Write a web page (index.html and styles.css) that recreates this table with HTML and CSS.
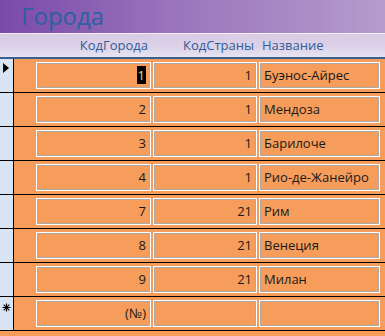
FILE: index.html
```html
<!DOCTYPE html>
<html lang="ru">
<head>
<meta charset="utf-8">
<title>Города</title>
<link rel="stylesheet" href="styles.css">
</head>
<body>
<div class="form">
  <header class="form-header">
    <h1 class="form-title">Города</h1>
  </header>
  <div class="page-header">
    <div class="gutter"></div>
    <div class="fields">
      <span class="label num">КодГорода</span>
      <span class="label num">КодСтраны</span>
      <span class="label">Название</span>
    </div>
  </div>
  <div class="records">
    <div class="record">
      <div class="selector"><span class="current"></span></div>
      <div class="fields">
        <span class="field num"><span class="sel">1</span></span>
        <span class="field num">1</span>
        <span class="field">Буэнос-Айрес</span>
      </div>
    </div>
    <div class="record">
      <div class="selector"></div>
      <div class="fields">
        <span class="field num">2</span>
        <span class="field num">1</span>
        <span class="field">Мендоза</span>
      </div>
    </div>
    <div class="record">
      <div class="selector"></div>
      <div class="fields">
        <span class="field num">3</span>
        <span class="field num">1</span>
        <span class="field">Барилоче</span>
      </div>
    </div>
    <div class="record">
      <div class="selector"></div>
      <div class="fields">
        <span class="field num">4</span>
        <span class="field num">1</span>
        <span class="field">Рио-де-Жанейро</span>
      </div>
    </div>
    <div class="record">
      <div class="selector"></div>
      <div class="fields">
        <span class="field num">7</span>
        <span class="field num">21</span>
        <span class="field">Рим</span>
      </div>
    </div>
    <div class="record">
      <div class="selector"></div>
      <div class="fields">
        <span class="field num">8</span>
        <span class="field num">21</span>
        <span class="field">Венеция</span>
      </div>
    </div>
    <div class="record">
      <div class="selector"></div>
      <div class="fields">
        <span class="field num">9</span>
        <span class="field num">21</span>
        <span class="field">Милан</span>
      </div>
    </div>
    <div class="record">
      <div class="selector">
        <svg class="new" width="9" height="9" viewBox="0 0 9 9" aria-hidden="true">
          <path d="M4.5 0.5V8.5M0.5 4.5H8.5M1.7 1.7L7.3 7.3M7.3 1.7L1.7 7.3" stroke="#000" stroke-width="1.1" fill="none"/>
        </svg>
      </div>
      <div class="fields">
        <span class="field num">(№)</span>
        <span class="field num"></span>
        <span class="field"></span>
      </div>
    </div>
  </div>
</div>
</body>
</html>
```
FILE: styles.css
```css
html, body {
  margin: 0;
  padding: 0;
}

body {
  width: 385px;
  height: 336px;
  overflow: hidden;
  background: #f69d5b;
  font-family: "Open Sans", "Noto Sans", sans-serif;
}

.form {
  display: flex;
  flex-direction: column;
}

/* Form header band */
.form-header {
  height: 34px;
  box-sizing: border-box;
  background: linear-gradient(90deg, #7a4aa8 0%, #9a74bc 45%, #b59ccd 100%);
  border-bottom: 1px solid #f4f0f8;
}

.form-title {
  margin: 0;
  padding-left: 21px;
  font-weight: normal;
  font-size: 24px;
  line-height: 31px;
  color: #2e5fa0;
}

/* Column labels band */
.page-header {
  height: 23px;
  display: flex;
  background: linear-gradient(180deg, #d9cbe5 0%, #dcd2e8 55%, #e6e3f2 100%);
  border-bottom: 2px solid #3b5f8e;
}

.page-header .gutter {
  width: 36px;
  flex: none;
}

.label {
  font-size: 13px;
  line-height: 22px;
  color: #2f5c9a;
  padding: 0 3px;
}

/* Shared column grid for labels and fields */
.fields {
  display: grid;
  grid-template-columns: 115px 104px 121px;
  column-gap: 2px;
}

.num {
  text-align: right;
}

.records {
  display: flex;
  flex-direction: column;
}

.record {
  display: flex;
  height: 33px;
  border-bottom: 1px solid #000;
}

.selector {
  width: 13px;
  flex: none;
  background: #d6e4f3;
  border-right: 1px solid #000;
  margin-right: 22px;
  position: relative;
}

.record .fields {
  padding-top: 3px;
}

.current {
  position: absolute;
  left: 3px;
  top: 4px;
  width: 0;
  height: 0;
  border-top: 5px solid transparent;
  border-bottom: 5px solid transparent;
  border-left: 6px solid #000;
}

.new {
  position: absolute;
  left: 2px;
  top: 6px;
  display: block;
}

.field {
  box-sizing: border-box;
  height: 27px;
  border: 1px solid #fff;
  box-shadow: inset 0 0 0 1px #a9a9a9;
  padding: 0 4px;
  font-size: 13px;
  line-height: 24px;
  color: #1a1a1a;
  white-space: nowrap;
  overflow: hidden;
}

.sel {
  background: #000;
  color: #dfe27a;
  padding: 0 1px;
}
```
